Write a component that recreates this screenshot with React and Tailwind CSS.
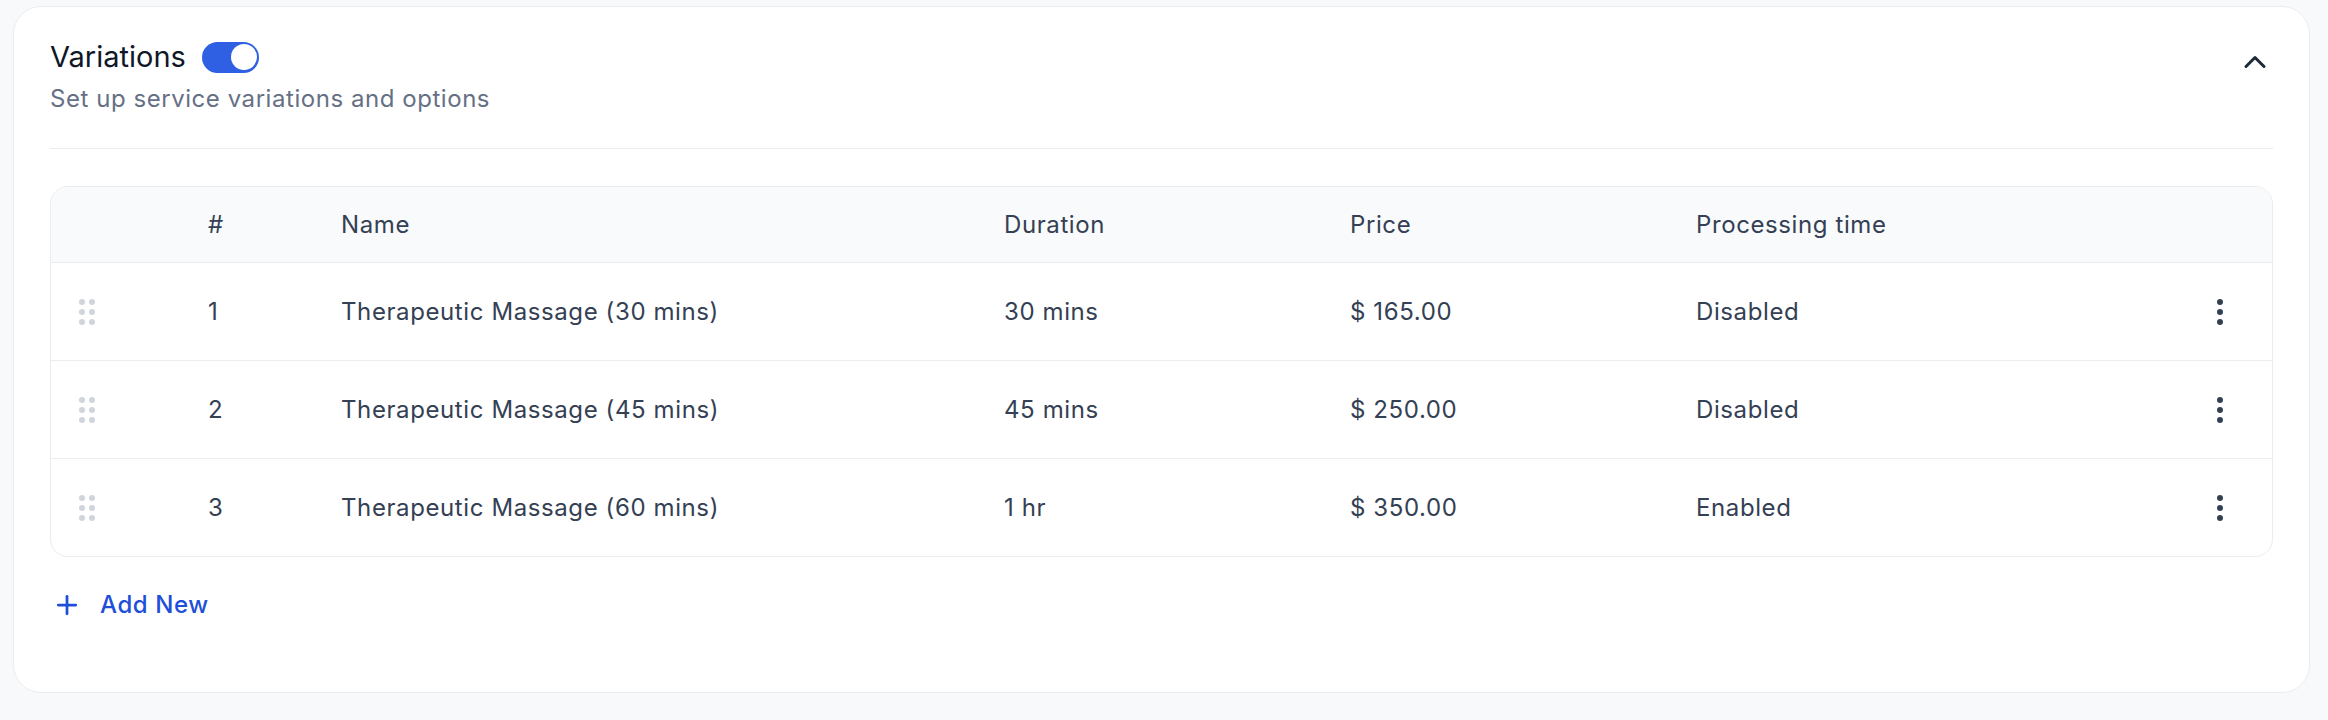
import React from "react";
import { ChevronUp, Plus } from "lucide-react";

const rows = [
  { id: 1, name: "Therapeutic Massage (30 mins)", duration: "30 mins", price: "$ 165.00", processing: "Disabled" },
  { id: 2, name: "Therapeutic Massage (45 mins)", duration: "45 mins", price: "$ 250.00", processing: "Disabled" },
  { id: 3, name: "Therapeutic Massage (60 mins)", duration: "1 hr", price: "$ 350.00", processing: "Enabled" },
];

const cols = "grid grid-cols-[157px_133px_663px_346px_346px_1fr_104px] items-center";

const DragHandle = () => (
  <div className="grid grid-cols-2 gap-x-[4px] gap-y-[4px] w-[16px]">
    {[0, 1, 2, 3, 4, 5].map((i) => (
      <span key={i} className="h-[6px] w-[6px] rounded-full bg-[#d0d5dd]" />
    ))}
  </div>
);

const MoreDots = () => (
  <div className="flex flex-col items-center gap-[4px]">
    {[0, 1, 2].map((i) => (
      <span key={i} className="h-[6px] w-[6px] rounded-full bg-[#344054]" />
    ))}
  </div>
);

export default function App() {
  return (
    <div className="min-h-screen bg-[#f8f9fb] pl-[13px] pr-[18px] pt-[6px] font-['Inter',sans-serif]">
      <div className="h-[687px] rounded-[28px] border border-[#eaecf0] bg-white px-[36px] pt-[35px]">
        {/* Header */}
        <div className="flex items-start justify-between">
          <div>
            <div className="flex h-[30px] items-center gap-[16px]">
              <h2 className="text-[29px] leading-[30px] font-normal text-[#101828]">Variations</h2>
              <button className="relative h-[31px] w-[57px] rounded-full bg-[#2f60e3]">
                <span className="absolute right-[2px] top-[2.5px] h-[26px] w-[26px] rounded-full bg-white" />
              </button>
            </div>
            <p className="mt-[9px] text-[24px] leading-[36px] tracking-[0.55px] text-[#667085]">
              Set up service variations and options
            </p>
          </div>
          <ChevronUp size={36} strokeWidth={2} className="mt-[2px] text-[#1d2939]" />
        </div>

        <div className="mt-[31px] h-px bg-[#eaecf0]" />

        {/* Table */}
        <div className="mt-[37px] overflow-hidden rounded-[18px] border border-[#eaecf0] text-[24px] tracking-[0.6px] text-[#344054]">
          <div className={`${cols} h-[75px] bg-[#f9fafb]`}>
            <div />
            <div>#</div>
            <div>Name</div>
            <div>Duration</div>
            <div>Price</div>
            <div>Processing time</div>
            <div />
          </div>
          {rows.map((r) => (
            <div key={r.id} className={`${cols} h-[98px] border-t border-[#eaecf0]`}>
              <div className="pl-[28px]">
                <DragHandle />
              </div>
              <div>{r.id}</div>
              <div>{r.name}</div>
              <div>{r.duration}</div>
              <div>{r.price}</div>
              <div>{r.processing}</div>
              <div className="flex justify-center">
                <MoreDots />
              </div>
            </div>
          ))}
        </div>

        {/* Add New */}
        <button className="mt-[30px] flex h-[36px] items-center gap-[18px] pl-[2px] text-[24px] font-medium tracking-[0.6px] text-[#1f4fd8]">
          <Plus size={30} strokeWidth={2.2} />
          Add New
        </button>
      </div>
    </div>
  );
}
